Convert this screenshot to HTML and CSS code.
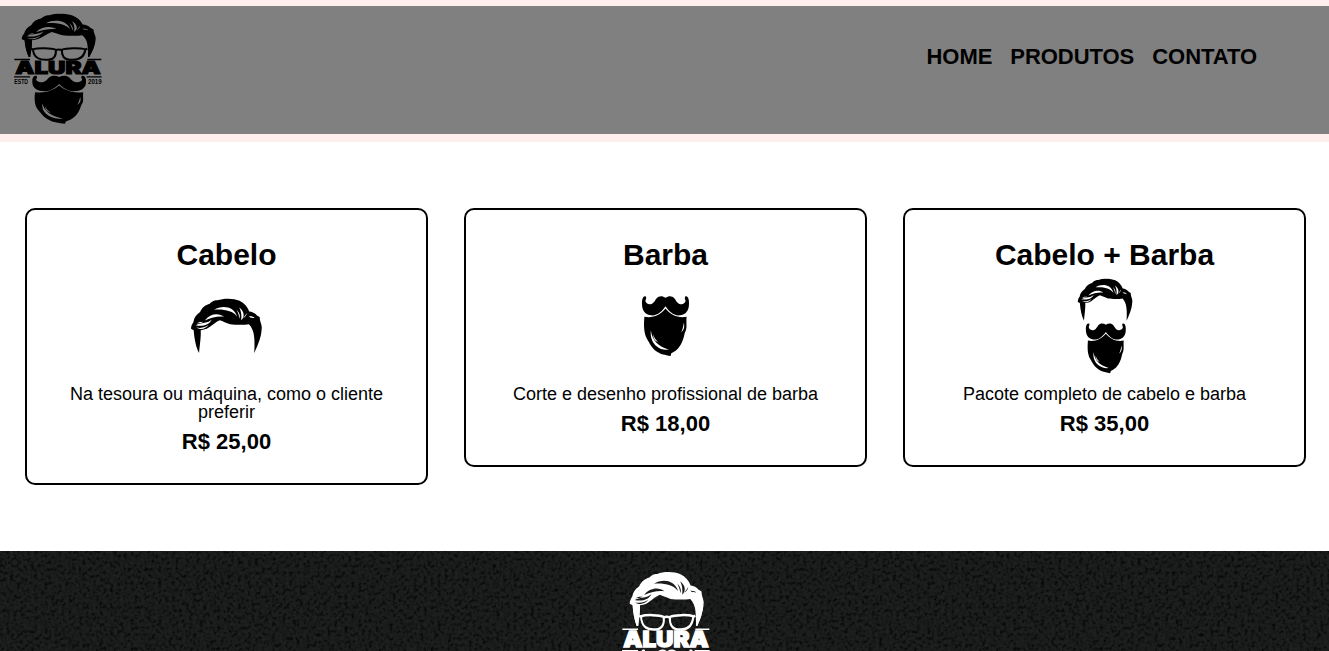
FILE: index.html
```html
<!DOCTYPE html>
<html lang="pt-br">
<head>
<meta charset="UTF-8">
<title>Produtos - Barbearia Alura</title>
<link rel="stylesheet" href="styles.css">
</head>
<body>
<svg class="defs" width="0" height="0" aria-hidden="true">
  <symbol id="hair" viewBox="30 38 218 167" preserveAspectRatio="none">
    <path fill="currentColor" d="M33 130C33 122 36 115 40 110C42 98 48 88 60 80C66 66 78 58 88 56C98 46 106 45 112 45C130 38 160 38 178 46C192 53 202 64 207 78C216 79 224 83 230 90L238 95C238 110 246 118 244 130C243 156 232 180 222 202C222 190 224 170 221 150C220 138 214 124 206 116C190 119 165 118 150 116C138 112 128 107 119 104C108 108 98 118 86 126C78 132 70 132 62 134C63 155 60 170 57 202C48 185 43 160 41 134Z"/>
    <g class="streak">
      <path d="M102 73C126 58 162 62 171 94C158 76 132 71 102 73Z"/>
      <path d="M74 105C90 84 116 82 132 94C112 92 96 96 74 105Z"/>
      <path d="M177 66C193 78 194 94 183 104C184 90 184 80 177 66Z"/>
      <path d="M169 72C178 82 181 90 178 100C176 88 173 80 169 72Z"/>
      <path d="M200 82C199 90 195 95 188 98C194 93 196 88 200 82Z"/>
      <path d="M206 93C213 92 220 94 223 98C216 97 211 98 206 93Z"/>
      <path d="M47 119C65 110 84 114 95 102C87 120 65 123 47 119Z"/>
      <path d="M49 126C63 129 76 126 86 118C77 131 61 134 49 126Z"/>
      <path d="M50 114C57 109 64 110 70 109C64 114 57 113 50 114Z"/>
    </g>
  </symbol>
  <symbol id="beard" viewBox="34 34 144 180" preserveAspectRatio="none">
    <path fill="currentColor" d="M106 42C99 37 92 36 86 39C76 44 76 55 65 60C55 63 47 57 47 50C48 46 51 43 48 38C40 34 36 48 37 60C37 78 45 90 62 93C82 96 95 82 106 67C117 82 130 96 150 93C167 90 175 78 175 60C176 48 172 34 164 38C161 43 164 46 165 50C165 57 157 63 147 60C136 55 136 44 126 39C120 36 113 37 106 42Z"/>
    <path fill="currentColor" d="M44 97C68 102 90 92 106 73C122 92 144 102 168 97C166 115 171 130 163 143L160 155C154 178 142 195 123 203L121 211C105 208 90 205 84 200C66 190 60 175 51 160C42 143 42 120 44 97Z"/>
    <g class="streak">
      <path d="M63 137C68 168 84 182 116 193C88 196 59 176 63 137Z"/>
      <path d="M71 149C72 158 76 164 85 171C74 168 69 160 71 149Z"/>
      <path d="M160 114C163 130 159 136 152 143C157 132 158 126 160 114Z"/>
    </g>
  </symbol>
  <symbol id="logo" viewBox="42 39 264 333" preserveAspectRatio="none">
    <clipPath id="above-name"><rect x="42" y="39" width="264" height="132"/></clipPath>
    <g clip-path="url(#above-name)">
      <use href="#hair" x="62" y="40" width="229" height="141"/>
      <path fill="currentColor" d="M74 118H95C97 130 94 142 92 154C90 160 88 166 86 171C79 154 75 136 74 118ZM262 112L286 122C281 146 275 158 267 171L264 160C263 144 264 128 262 112Z"/>
    </g>
    <g fill="none" stroke="currentColor" stroke-width="6">
      <path d="M99 148C113 143 154 144 167 149C170 166 162 179 144 179C119 181 101 174 99 148Z"/>
      <path d="M186 149C199 144 240 143 256 148C253 174 235 181 210 179C192 179 184 166 186 149Z"/>
      <path d="M167 151Q176 146 186 151M93 146L99 149M256 149L262 146"/>
    </g>
    <path fill="currentColor" d="M43 176.500H90V180.500H43ZM262 176.500H304V180.500H262ZM42 228.500H90V232.500H42ZM260 228.500H305V232.500H260Z"/>
    <text class="logo-name" x="46" y="221.500" textLength="256" lengthAdjust="spacingAndGlyphs">ALURA</text>
    <text class="logo-year" x="43" y="251" textLength="41" lengthAdjust="spacingAndGlyphs">ESTD</text>
    <text class="logo-year" x="264" y="251" textLength="41" lengthAdjust="spacingAndGlyphs">2019</text>
    <use href="#beard" x="93.500" y="224.500" width="168" height="149"/>
  </symbol>
</svg>

<header class="header">
  <h1 class="brand"><svg class="logo" role="img" aria-label="Alura"><use href="#logo"/></svg></h1>
  <nav class="nav">
    <a href="#">HOME</a>
    <a href="#">PRODUTOS</a>
    <a href="#">CONTATO</a>
  </nav>
</header>

<main class="main">
  <ul class="products">
    <li class="product">
      <h2>Cabelo</h2>
      <div class="picture picture-hair"><svg class="pic-hair"><use href="#hair"/></svg></div>
      <p class="description">Na tesoura ou máquina, como o cliente preferir</p>
      <p class="price">R$ 25,00</p>
    </li>
    <li class="product">
      <h2>Barba</h2>
      <div class="picture"><svg class="pic-beard"><use href="#beard"/></svg></div>
      <p class="description">Corte e desenho profissional de barba</p>
      <p class="price">R$ 18,00</p>
    </li>
    <li class="product">
      <h2>Cabelo + Barba</h2>
      <div class="picture picture-both"><svg class="pic-both" viewBox="0 0 170 288">
        <use href="#hair" x="0" y="0" width="168" height="129"/>
        <use href="#beard" x="24" y="132" width="124" height="154"/>
      </svg></div>
      <p class="description">Pacote completo de cabelo e barba</p>
      <p class="price">R$ 35,00</p>
    </li>
  </ul>
</main>

<footer class="footer">
  <svg class="texture" aria-hidden="true">
    <filter id="grain" x="0" y="0" width="100%" height="100%" color-interpolation-filters="sRGB">
      <feTurbulence type="fractalNoise" baseFrequency="0.29" numOctaves="3" seed="4"/>
      <feColorMatrix values="1 0 0 0 0  1 0 0 0 0  1 0 0 0 0  0 0 0 0 1"/>
      <feComponentTransfer>
        <feFuncR type="table" tableValues="0.03 0.03 0.04 0.075 0.102 0.112 0.12 0.125 0.125"/>
        <feFuncG type="table" tableValues="0.03 0.03 0.043 0.08 0.11 0.12 0.128 0.133 0.133"/>
        <feFuncB type="table" tableValues="0.03 0.03 0.041 0.077 0.106 0.116 0.124 0.129 0.129"/>
      </feComponentTransfer>
    </filter>
    <rect width="100%" height="100%" filter="url(#grain)"/>
  </svg>
  <svg class="logo logo-white" role="img" aria-label="Alura"><use href="#logo"/></svg>
</footer>
</body>
</html>
```

FILE: styles.css
```css
* { box-sizing: border-box; margin: 0; padding: 0; }

body {
  height: 651px;
  overflow: hidden;
  background: #fff;
  color: #000;
  font-family: "Liberation Sans", Arial, sans-serif;
  line-height: 1;
}

.defs { position: absolute; }
.streak { fill: var(--streak, #fff); }

.header {
  display: flex;
  justify-content: space-between;
  height: 142px;
  padding: 7px 72px 0 14px;
  border-top: 6px solid #fee;
  border-bottom: 8px solid #fee;
  background: #808080;
  --streak: #808080;
}

.logo { display: block; width: 88px; height: 111px; }
.logo-name {
  fill: currentColor;
  stroke: currentColor;
  stroke-width: 3px;
  font: 900 50px Inter, "DejaVu Sans", sans-serif;
}
.logo-year { fill: currentColor; font: bold 19px "Liberation Sans", sans-serif; }

.nav {
  display: flex;
  gap: 18px;
  padding-top: 33px;
  font-size: 22px;
  font-weight: bold;
  letter-spacing: -0.05px;
}
.nav a { color: #000; text-decoration: none; }

.products {
  display: flex;
  align-items: flex-start;
  gap: 36px;
  height: 409px;
  padding: 66px 0 0 25px;
  list-style: none;
}
.product {
  width: 403px;
  padding: 30px 20px;
  border: 2px solid #000;
  border-radius: 10px;
  text-align: center;
}
.product h2 { font-size: 30px; }
.picture {
  display: flex;
  justify-content: center;
  height: 115px;
  padding-top: 25px;
}
.picture-hair { padding-top: 28px; }
.picture-both { padding: 8px 0 0 1px; }
.pic-hair { width: 73px; height: 56px; }
.pic-beard { width: 49px; height: 62px; }
.pic-both { width: 57px; height: 97px; }
.description { font-size: 18px; }
.price { margin-top: 10px; font-size: 22px; font-weight: bold; }

.footer {
  display: flex;
  justify-content: center;
  position: relative;
  height: 100px;
  padding: 20px 0 0 2px;
  overflow: hidden;
  background: #1a1c1b;
}
.texture { position: absolute; inset: 0; width: 100%; height: 100%; }
.logo-white {
  position: relative;
  flex: none;
  height: 139px;
  color: #fff;
  --streak: #1a1c1b;
}
```
